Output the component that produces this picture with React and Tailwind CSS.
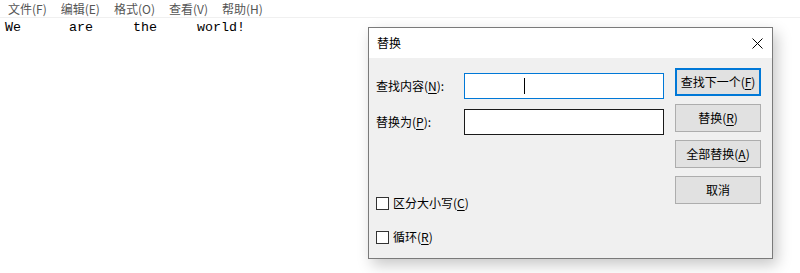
import React from "react";

const ui = { fontFamily: '"Microsoft YaHei", "Noto Sans CJK SC", "Noto Sans", sans-serif' };
const mono = { fontFamily: '"Liberation Mono", "DejaVu Sans Mono", monospace' };

function U({ children }) {
  return <span className="underline underline-offset-2 decoration-1">{children}</span>;
}

function Btn({ children, primary }) {
  return (
    <div
      className={
        "h-[28px] w-[86px] flex items-center justify-center bg-[#e1e1e1] text-[12px] text-black " +
        (primary ? "border-2 border-[#0078d7]" : "border border-[#adadad]")
      }
    >
      {children}
    </div>
  );
}

function Check({ children }) {
  return (
    <div className="h-[20px] flex items-center gap-[4px] text-[12px] text-black">
      <div className="w-[13px] h-[13px] border border-[#333333] bg-white" />
      <span>{children}</span>
    </div>
  );
}

export default function App() {
  return (
    <div className="relative w-[800px] h-[273px] bg-white overflow-hidden" style={ui}>
      <div className="h-[18px] flex items-center pl-[8px] gap-[14px] text-[12px] text-[#555555] border-b border-[#f0f0f0]">
        <span>文件(F)</span>
        <span>编辑(E)</span>
        <span>格式(O)</span>
        <span>查看(V)</span>
        <span>帮助(H)</span>
      </div>
      <div className="pl-[5px] pt-[1px] text-[13.33px] leading-[18px] text-black whitespace-pre" style={mono}>
        {"We      are     the     world!"}
      </div>

      <div className="absolute left-[368px] top-[27px] w-[405px] h-[232px] border border-[#7a7a7a] bg-[#f0f0f0] shadow-[4px_6px_14px_rgba(0,0,0,0.22)] flex flex-col">
        <div className="h-[30px] bg-white flex items-center justify-between pl-[8px] pr-[9px]">
          <span className="text-[12px] text-black">替换</span>
          <svg width="11" height="11" viewBox="0 0 11 11">
            <path d="M0.5 0.5 L10.5 10.5 M10.5 0.5 L0.5 10.5" stroke="#000" strokeWidth="1" />
          </svg>
        </div>
        <div className="flex-1 flex">
          <div className="w-[306px] pl-[7px] pt-[15px] flex flex-col">
            <div className="flex items-center h-[26px]">
              <div className="w-[88px] text-[12px] text-black">查找内容(<U>N</U>):</div>
              <div className="w-[200px] h-[26px] border border-[#0078d7] bg-white flex items-center pl-[59px]">
                <div className="w-[1px] h-[16px] bg-black" />
              </div>
            </div>
            <div className="flex items-center h-[26px] mt-[10px]">
              <div className="w-[88px] text-[12px] text-black">替换为(<U>P</U>):</div>
              <div className="w-[200px] h-[26px] border border-[#1a1a1a] bg-white" />
            </div>
            <div className="mt-[58px] flex flex-col gap-[14px]">
              <Check>区分大小写(<U>C</U>)</Check>
              <Check>循环(<U>R</U>)</Check>
            </div>
          </div>
          <div className="pt-[10px] flex flex-col gap-[8px]">
            <Btn primary>查找下一个(<U>F</U>)</Btn>
            <Btn>替换(<U>R</U>)</Btn>
            <Btn>全部替换(<U>A</U>)</Btn>
            <Btn>取消</Btn>
          </div>
        </div>
      </div>
    </div>
  );
}
